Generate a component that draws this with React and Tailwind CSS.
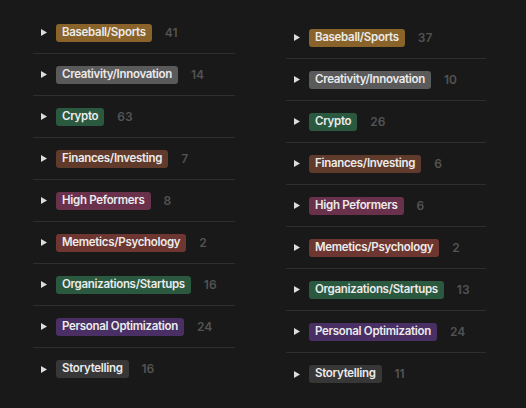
import React from 'react';

const tagColors = {
  yellow: 'bg-[#89632a]',
  gray: 'bg-[#5a5a5a]',
  green: 'bg-[#2b593f]',
  brown: 'bg-[#603b2c]',
  pink: 'bg-[#69314c]',
  red: 'bg-[#6e3630]',
  purple: 'bg-[#492f64]',
  plain: 'bg-[#373737]',
};

const left = [
  { name: 'Baseball/Sports', color: 'yellow', count: 41 },
  { name: 'Creativity/Innovation', color: 'gray', count: 14 },
  { name: 'Crypto', color: 'green', count: 63 },
  { name: 'Finances/Investing', color: 'brown', count: 7 },
  { name: 'High Peformers', color: 'pink', count: 8 },
  { name: 'Memetics/Psychology', color: 'red', count: 2 },
  { name: 'Organizations/Startups', color: 'green', count: 16 },
  { name: 'Personal Optimization', color: 'purple', count: 24 },
  { name: 'Storytelling', color: 'plain', count: 16 },
];

const right = [
  { name: 'Baseball/Sports', color: 'yellow', count: 37 },
  { name: 'Creativity/Innovation', color: 'gray', count: 10 },
  { name: 'Crypto', color: 'green', count: 26 },
  { name: 'Finances/Investing', color: 'brown', count: 6 },
  { name: 'High Peformers', color: 'pink', count: 6 },
  { name: 'Memetics/Psychology', color: 'red', count: 2 },
  { name: 'Organizations/Startups', color: 'green', count: 13 },
  { name: 'Personal Optimization', color: 'purple', count: 24 },
  { name: 'Storytelling', color: 'plain', count: 11 },
];

function Caret() {
  return (
    <svg width="6" height="7" viewBox="0 0 6 7" className="shrink-0">
      <path d="M0 0 L6 3.5 L0 7 Z" fill="rgba(255,255,255,0.85)" />
    </svg>
  );
}

function Group({ name, color, count, last }) {
  return (
    <div className={`h-[42px] flex items-center pl-2 ${last ? '' : 'border-b border-[#2e2e2e]'}`}>
      <Caret />
      <span className={`ml-[9px] h-[18px] px-[6px] rounded-[3px] flex items-center text-[11.5px] tracking-[-0.3px] font-semibold text-[#ebebeb] whitespace-nowrap ${tagColors[color]}`}>
        {name}
      </span>
      <span className="ml-[13px] text-[12px] font-semibold text-[#535353]">{count}</span>
    </div>
  );
}

export default function App() {
  return (
    <div
      className="w-[526px] h-[408px] bg-[#191919] flex items-start pl-[33px] pt-[12px] gap-[51px] overflow-hidden"
      style={{ fontFamily: 'Inter, "Noto Sans", sans-serif' }}
    >
      <div className="w-[202px] flex flex-col">
        {left.map((g, i) => (
          <Group key={g.name} {...g} last={i === left.length - 1} />
        ))}
      </div>
      <div className="w-[200px] mt-[5px] flex flex-col">
        {right.map((g, i) => (
          <Group key={g.name} {...g} last={i === right.length - 1} />
        ))}
      </div>
    </div>
  );
}
